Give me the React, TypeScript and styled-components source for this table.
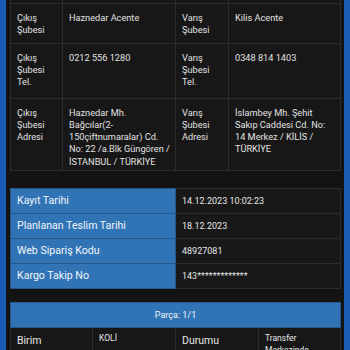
import * as React from "react";
import styled, { createGlobalStyle } from "styled-components";

const GlobalStyle = createGlobalStyle`
  html, body {
    margin: 0;
    padding: 0;
    background: #1a5cb3;
  }
  body {
    font-family: Roboto, "Noto Sans", sans-serif;
    color: #e6e6e6;
    overflow: hidden;
  }
`;

const branchRows = [
  {
    height: 40,
    fromLabel: "Çıkış Şubesi",
    fromValue: "Haznedar Acente",
    toLabel: "Varış Şubesi",
    toValue: "Kilis Acente",
  },
  {
    height: 55,
    fromLabel: "Çıkış Şubesi Tel.",
    fromValue: "0212 556 1280",
    toLabel: "Varış Şubesi Tel.",
    toValue: "0348 814 1403",
  },
  {
    height: 72,
    fromLabel: "Çıkış Şubesi Adresi",
    fromValue:
      "Haznedar Mh. Bağcılar(2-150çiftnumaralar) Cd. No: 22 /a.Blk Güngören / İSTANBUL / TÜRKİYE",
    toLabel: "Varış Şubesi Adresi",
    toValue: "İslambey Mh. Şehit Sakıp Caddesi Cd. No: 14 Merkez / KİLİS / TÜRKİYE",
  },
];

const shipmentRows = [
  { label: "Kayıt Tarihi", value: "14.12.2023 10:02:23" },
  { label: "Planlanan Teslim Tarihi", value: "18.12.2023" },
  { label: "Web Sipariş Kodu", value: "48927081" },
  { label: "Kargo Takip No", value: "143*************" },
];

function App() {
  return (
    <>
      <GlobalStyle />
      <Page>
        <BranchTable>
          <colgroup>
            <Col $w={52} />
            <Col $w={113} />
            <Col $w={53} />
            <Col $w={112} />
          </colgroup>
          <tbody>
            <StubRow>
              <td />
              <td />
              <td />
              <td />
            </StubRow>
            {branchRows.map((row) => (
              <BranchRow key={row.fromLabel} $h={row.height}>
                <BranchLabel>{row.fromLabel}</BranchLabel>
                <BranchValue $padRight={5}>{row.fromValue}</BranchValue>
                <BranchLabel>{row.toLabel}</BranchLabel>
                <BranchValue $padRight={10}>{row.toValue}</BranchValue>
              </BranchRow>
            ))}
          </tbody>
        </BranchTable>

        <ShipmentTable>
          <colgroup>
            <Col $w={165} />
            <Col $w={165} />
          </colgroup>
          <tbody>
            {shipmentRows.map((row) => (
              <tr key={row.label}>
                <ShipmentLabel>{row.label}</ShipmentLabel>
                <ShipmentValue>{row.value}</ShipmentValue>
              </tr>
            ))}
          </tbody>
        </ShipmentTable>

        <PieceTable>
          <colgroup>
            <Col $w={82} />
            <Col $w={83} />
            <Col $w={83} />
            <Col $w={82} />
          </colgroup>
          <thead>
            <tr>
              <PieceHeader colSpan={4}>Parça: 1/1</PieceHeader>
            </tr>
          </thead>
          <tbody>
            <tr>
              <PieceLabel>Birim</PieceLabel>
              <PieceValue>KOLİ</PieceValue>
              <PieceLabel>Durumu</PieceLabel>
              <PieceValue>Transfer Merkezinde</PieceValue>
            </tr>
          </tbody>
        </PieceTable>
      </Page>
    </>
  );
}

const Page = styled.div`
  margin: 0 6px;
  padding: 0 4px;
  height: 350px;
  background: #131313;
  box-sizing: border-box;
`;

const Col = styled.col<{ $w: number }>`
  width: ${(p) => p.$w}px;
`;

const BranchTable = styled.table`
  width: 330px;
  table-layout: fixed;
  border-collapse: collapse;
  background: #171717;
  td {
    border: 1px solid #2c2c2c;
  }
`;

const StubRow = styled.tr`
  height: 3px;
  td {
    padding: 0;
    border-top: none;
  }
`;

const BranchRow = styled.tr<{ $h: number }>`
  height: ${(p) => p.$h}px;
`;

const BranchLabel = styled.td`
  vertical-align: top;
  padding: 8px 4px 0 6px;
  font-size: 9.2px;
  line-height: 12.3px;
  color: #e2e2e2;
`;

const BranchValue = styled(BranchLabel)<{ $padRight: number }>`
  padding-right: ${(p) => p.$padRight}px;
`;

const ShipmentTable = styled.table`
  width: 330px;
  margin-top: 17px;
  table-layout: fixed;
  border-collapse: collapse;
  tr {
    height: 25px;
  }
`;

const ShipmentLabel = styled.td`
  padding: 0 6px;
  background: #3174b6;
  border: 1px solid #24578c;
  font-size: 10.6px;
  color: #f2f4f8;
  vertical-align: middle;
  white-space: nowrap;
`;

const ShipmentValue = styled.td`
  padding: 0 6px;
  background: #181818;
  border: 1px solid #2c2c2c;
  font-size: 9px;
  color: #e6e6e6;
  vertical-align: middle;
`;

const PieceTable = styled.table`
  width: 330px;
  margin-top: 13px;
  table-layout: fixed;
  border-collapse: collapse;
`;

const PieceHeader = styled.th`
  height: 24px;
  padding: 0;
  background: #3174b6;
  border: 1px solid #24578c;
  font-size: 9px;
  font-weight: normal;
  color: #f2f4f8;
  text-align: center;
`;

const PieceLabel = styled.td`
  height: 30px;
  padding: 6px 6px 0 6px;
  background: #171717;
  border: 1px solid #2c2c2c;
  font-size: 10.5px;
  line-height: 14px;
  vertical-align: top;
  color: #e6e6e6;
`;

const PieceValue = styled(PieceLabel)`
  padding-top: 4px;
  font-size: 8.5px;
  line-height: 12px;
`;

export default App;
